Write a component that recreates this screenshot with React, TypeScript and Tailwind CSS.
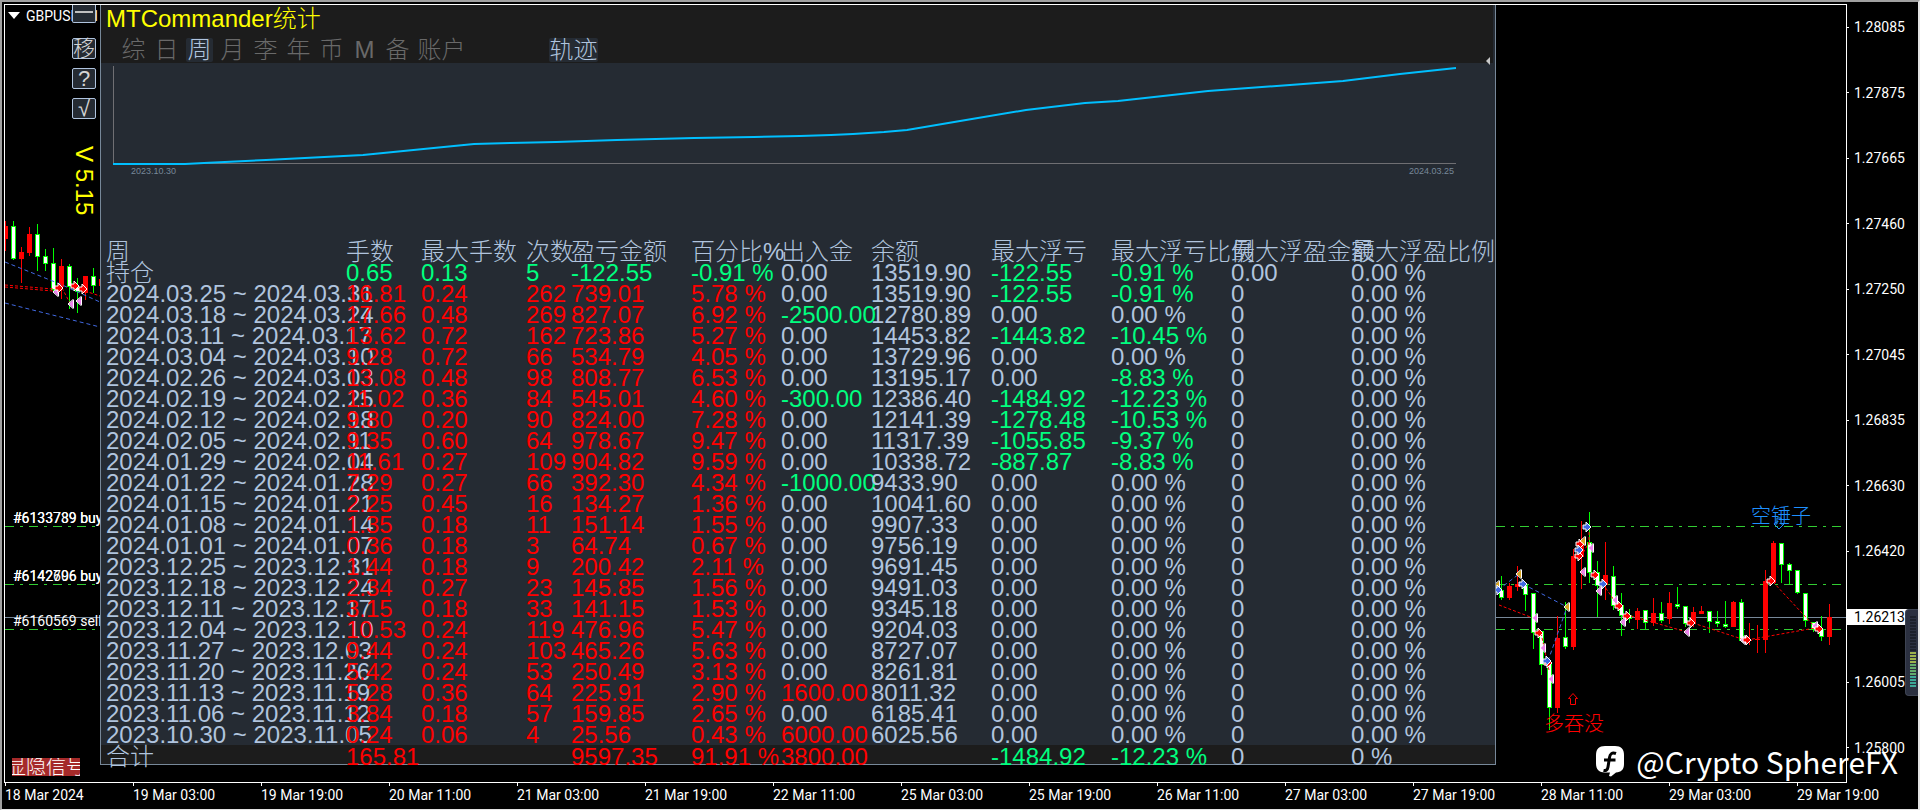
type Tone = "r" | "g" | "n";

const TONES: Record<Tone, string> = {
  r: "text-[#ff0000]",
  g: "text-[#00ff7f]",
  n: "text-[#b0c4de]",
};

const HEADERS = [
  "周",
  "手数",
  "最大手数",
  "次数",
  "盈亏金额",
  "百分比%",
  "出入金",
  "余额",
  "最大浮亏",
  "最大浮亏比例",
  "最大浮盈金额",
  "最大浮盈比例",
];

const COLS = [
  "w-[245px]",
  "w-[75px]",
  "w-[105px]",
  "w-[45px]",
  "w-[120px]",
  "w-[90px]",
  "w-[90px]",
  "w-[120px]",
  "w-[120px]",
  "w-[120px]",
  "w-[120px]",
  "",
];

// week, lots, max lots, trades, profit, percent, deposit, balance, max loss, max loss %
const WEEKS = [
  ["2024.03.25 ~ 2024.03.31", "16.81", "0.24", "262", "739.01", "5.78", "0.00", "13519.90", "-122.55", "-0.91"],
  ["2024.03.18 ~ 2024.03.24", "17.66", "0.48", "269", "827.07", "6.92", "-2500.00", "12780.89", "0.00", "0.00"],
  ["2024.03.11 ~ 2024.03.17", "13.62", "0.72", "162", "723.86", "5.27", "0.00", "14453.82", "-1443.82", "-10.45"],
  ["2024.03.04 ~ 2024.03.10", "9.28", "0.72", "66", "534.79", "4.05", "0.00", "13729.96", "0.00", "0.00"],
  ["2024.02.26 ~ 2024.03.03", "13.08", "0.48", "98", "808.77", "6.53", "0.00", "13195.17", "0.00", "-8.83"],
  ["2024.02.19 ~ 2024.02.25", "11.02", "0.36", "84", "545.01", "4.60", "-300.00", "12386.40", "-1484.92", "-12.23"],
  ["2024.02.12 ~ 2024.02.18", "9.80", "0.20", "90", "824.00", "7.28", "0.00", "12141.39", "-1278.48", "-10.53"],
  ["2024.02.05 ~ 2024.02.11", "9.35", "0.60", "64", "978.67", "9.47", "0.00", "11317.39", "-1055.85", "-9.37"],
  ["2024.01.29 ~ 2024.02.04", "11.61", "0.27", "109", "904.82", "9.59", "0.00", "10338.72", "-887.87", "-8.83"],
  ["2024.01.22 ~ 2024.01.28", "7.29", "0.27", "66", "392.30", "4.34", "-1000.00", "9433.90", "0.00", "0.00"],
  ["2024.01.15 ~ 2024.01.21", "2.25", "0.45", "16", "134.27", "1.36", "0.00", "10041.60", "0.00", "0.00"],
  ["2024.01.08 ~ 2024.01.14", "1.35", "0.18", "11", "151.14", "1.55", "0.00", "9907.33", "0.00", "0.00"],
  ["2024.01.01 ~ 2024.01.07", "0.36", "0.18", "3", "64.74", "0.67", "0.00", "9756.19", "0.00", "0.00"],
  ["2023.12.25 ~ 2023.12.31", "1.44", "0.18", "9", "200.42", "2.11", "0.00", "9691.45", "0.00", "0.00"],
  ["2023.12.18 ~ 2023.12.24", "2.34", "0.27", "23", "145.85", "1.56", "0.00", "9491.03", "0.00", "0.00"],
  ["2023.12.11 ~ 2023.12.17", "3.15", "0.18", "33", "141.15", "1.53", "0.00", "9345.18", "0.00", "0.00"],
  ["2023.12.04 ~ 2023.12.10", "10.53", "0.24", "119", "476.96", "5.47", "0.00", "9204.03", "0.00", "0.00"],
  ["2023.11.27 ~ 2023.12.03", "9.44", "0.24", "103", "465.26", "5.63", "0.00", "8727.07", "0.00", "0.00"],
  ["2023.11.20 ~ 2023.11.26", "5.42", "0.24", "53", "250.49", "3.13", "0.00", "8261.81", "0.00", "0.00"],
  ["2023.11.13 ~ 2023.11.19", "5.28", "0.36", "64", "225.91", "2.90", "1600.00", "8011.32", "0.00", "0.00"],
  ["2023.11.06 ~ 2023.11.12", "3.84", "0.18", "57", "159.85", "2.65", "0.00", "6185.41", "0.00", "0.00"],
  ["2023.10.30 ~ 2023.11.05", "0.24", "0.06", "4", "25.56", "0.43", "6000.00", "6025.56", "0.00", "0.00"],
];

const OPEN_ROW = ["持仓", "0.65", "0.13", "5", "-122.55", "-0.91 %", "0.00", "13519.90", "-122.55", "-0.91 %", "0.00", "0.00 %"];
const TOTAL_ROW = ["合计", "165.81", "", "", "9597.35", "91.91 %", "3800.00", "", "-1484.92", "-12.23 %", "0", "0 %"];

const TABS = ["综", "日", "周", "月", "李", "年", "币", "M", "备"];

const PRICES = [
  "1.28085",
  "1.27875",
  "1.27665",
  "1.27460",
  "1.27250",
  "1.27045",
  "1.26835",
  "1.26630",
  "1.26420",
  "1.26213",
  "1.26005",
  "1.25800",
];
const CURRENT_PRICE = "1.26213";

const TIMES = [
  "18 Mar 2024",
  "19 Mar 03:00",
  "19 Mar 19:00",
  "20 Mar 11:00",
  "21 Mar 03:00",
  "21 Mar 19:00",
  "22 Mar 11:00",
  "25 Mar 03:00",
  "25 Mar 19:00",
  "26 Mar 11:00",
  "27 Mar 03:00",
  "27 Mar 19:00",
  "28 Mar 11:00",
  "29 Mar 03:00",
  "29 Mar 19:00",
];

// [direction, high, body top, body bottom, low], one candle every 8px
type Candle = ["u" | "d", number, number, number, number];

const LEFT_CANDLES: Candle[] = [
  ["u", 221, 226, 239, 251],
  ["d", 221, 226, 259, 260],
  ["u", 247, 252, 259, 283],
  ["u", 227, 234, 253, 256],
  ["d", 224, 234, 257, 271],
  ["d", 249, 256, 264, 271],
  ["d", 248, 263, 290, 292],
  ["u", 259, 266, 287, 299],
  ["d", 264, 266, 287, 309],
  ["d", 278, 287, 292, 313],
  ["u", 276, 276, 293, 300],
  ["d", 268, 276, 286, 293],
  ["u", 276, 279, 286, 290],
];

const RIGHT_CANDLES: Candle[] = [
  ["d", 576, 590, 598, 600],
  ["u", 583, 586, 598, 600],
  ["u", 566, 584, 587, 591],
  ["d", 584, 585, 595, 611],
  ["d", 593, 593, 633, 649],
  ["d", 631, 631, 665, 675],
  ["d", 663, 664, 708, 730],
  ["u", 616, 638, 708, 713],
  ["d", 602, 637, 647, 649],
  ["u", 549, 556, 647, 650],
  ["u", 521, 542, 557, 589],
  ["d", 512, 542, 573, 583],
  ["d", 561, 572, 586, 617],
  ["u", 542, 575, 585, 600],
  ["d", 566, 576, 606, 610],
  ["d", 593, 605, 616, 636],
  ["d", 609, 615, 619, 623],
  ["u", 608, 611, 620, 629],
  ["d", 610, 610, 623, 629],
  ["u", 598, 613, 623, 626],
  ["d", 602, 613, 621, 623],
  ["u", 592, 603, 619, 624],
  ["d", 587, 604, 607, 609],
  ["d", 606, 606, 624, 627],
  ["u", 607, 612, 624, 627],
  ["u", 606, 611, 614, 614],
  ["d", 611, 611, 622, 633],
  ["d", 611, 621, 624, 627],
  ["d", 601, 624, 627, 628],
  ["u", 601, 602, 627, 627],
  ["d", 599, 602, 641, 642],
  ["u", 623, 640, 641, 645],
  ["u", 625, 639, 640, 653],
  ["u", 570, 581, 640, 653],
  ["u", 541, 543, 583, 583],
  ["d", 543, 543, 565, 583],
  ["d", 563, 564, 571, 584],
  ["d", 570, 570, 593, 594],
  ["d", 593, 593, 621, 627],
  ["d", 622, 622, 630, 632],
  ["d", 616, 629, 637, 641],
  ["u", 604, 617, 637, 645],
];

const EQUITY: [number, number][] = [
  [113, 164],
  [185, 164],
  [204, 163],
  [266, 160],
  [363, 155],
  [474, 144],
  [510, 143],
  [556, 142],
  [617, 140],
  [694, 138],
  [754, 137],
  [800, 136],
  [831, 135],
  [853, 134],
  [884, 132],
  [907, 130],
  [966, 120],
  [1026, 110],
  [1085, 103],
  [1118, 101],
  [1208, 91],
  [1290, 85],
  [1343, 81],
  [1400, 74],
  [1456, 68],
];

function cells(w: string[]) {
  return [...w.slice(0, 5), `${w[5]} %`, ...w.slice(6, 9), `${w[9]} %`, "0", "0.00 %"];
}

// column 0, balance and floating profit stay neutral, the rest depends on the sign
function tone(value: string, col: number, open: boolean): Tone {
  if (col === 0 || col === 7 || col > 9) return "n";
  if (value.startsWith("-")) return "g";
  if (col === 6 || col > 7) return parseFloat(value) === 0 ? "n" : "r";
  return open ? "g" : "r";
}

function Candles({ data, x0 }: { data: Candle[]; x0: number }) {
  return (
    <g shapeRendering="crispEdges">
      {data.map(([dir, high, top, bottom, low], i) => {
        const x = x0 + i * 8;
        const color = dir === "u" ? "#ff0000" : "#00ff00";
        return (
          <g key={i}>
            <rect x={x} y={high} width="1" height={Math.max(1, low - high)} fill={color} />
            <rect x={x - 2} y={top} width="5" height={Math.max(1, bottom - top)} fill={color} />
            {dir === "d" && bottom - top > 2 && (
              <rect x={x - 1} y={top + 1} width="3" height={bottom - top - 2} fill="#fff" />
            )}
          </g>
        );
      })}
    </g>
  );
}

function Entry({ x, y, color }: { x: number; y: number; color: string }) {
  return (
    <path
      d={`M${x - 4} ${y - 2}h3v-3l5 5l-5 5v-3h-3z`}
      fill={color}
      stroke="#fff"
      strokeWidth="1"
    />
  );
}

function Exit({ x, y, color }: { x: number; y: number; color: string }) {
  return (
    <g>
      <path d={`M${x + 2} ${y - 4}v8l-4.500 -4z`} fill={color} />
      <path d={`M${x + 2.5} ${y - 4.5}v9M${x + 2} ${y - 4.5}l-5 4.500l5 4.500`} fill="none" stroke="#fff" />
    </g>
  );
}

function Levels({ x1, x2 }: { x1: number; x2: number }) {
  return (
    <g shapeRendering="crispEdges">
      {[526, 584, 629].map((y) => (
        <path key={y} d={`M${x1} ${y}.5H${x2}`} stroke="#32cd32" strokeDasharray="9 6 3 6" />
      ))}
      <path d={`M${x1} 617.5H${x2}`} stroke="#778899" />
    </g>
  );
}

function ToolButton({ label, children, className = "" }: { label: string; children: React.ReactNode; className?: string }) {
  return (
    <button
      type="button"
      aria-label={label}
      className={`flex h-[21px] w-6 items-center justify-center rounded-[2px] border border-[#b0c4de] bg-[#252b33] text-[22px] leading-none font-light text-[#d3d3d3] ${className}`}
    >
      {children}
    </button>
  );
}

function LeftStrip() {
  return (
    <div className="relative flex w-[95px] shrink-0 flex-col overflow-hidden">
      <svg className="absolute top-0 left-0" width="95" height="777" viewBox="5 5 95 777" aria-hidden="true">
        <path d="M8 12h12l-6 7z" fill="#fff" />
        <Levels x1={5} x2={100} />
        <Candles data={LEFT_CANDLES} x0={5} />
        <g fill="none">
          <path d="M5 262L60 284L100 302M5 303L100 327" stroke="#4169e1" strokeDasharray="4 3" />
          <path d="M5 285L53 289M5 287L53 291M62 288L71 305M85 291L100 296" stroke="#ff0000" strokeDasharray="3 2" />
        </g>
        <Exit x={56} y={292} color="#ee82ee" />
        <Entry x={59} y={288} color="#ff0000" />
        <Entry x={75} y={286} color="#ff0000" />
        <Entry x={83} y={289} color="#ff0000" />
        <Exit x={71} y={304} color="#ee82ee" />
        <Exit x={79} y={301} color="#ee82ee" />
        <g fill="#fff" fontFamily="Roboto, sans-serif" fontSize="14">
          <text x="26" y="21">GBPUSD,H1</text>
          <text x="13" y="523">#6133739 buy</text>
          <text x="13" y="523">#6133789 buy</text>
          <text x="13" y="581">#6142696 buy</text>
          <text x="13" y="581">#6142706 buy</text>
          <text x="13" y="626">#6160569 sell</text>
        </g>
      </svg>
      <div className="relative flex flex-col items-end gap-[9px] pr-1">
        <button
          type="button"
          aria-label="最小化"
          className="mb-[6px] h-[18px] w-6 rounded-b-[2px] border border-t-0 border-[#b0c4de] bg-[#252b33]"
        >
          <span className="mx-auto mb-1 block h-[2px] w-[18px] bg-[#c0c0c0]" />
        </button>
        <ToolButton label="移动">移</ToolButton>
        <ToolButton label="帮助">?</ToolButton>
        <ToolButton label="确认">√</ToolButton>
        <p className="mt-[18px] text-[24px] leading-[24px] text-[#ffff00] [writing-mode:vertical-rl]">V 5.15</p>
      </div>
      <button
        type="button"
        className="relative mt-auto mb-[6px] ml-[7px] flex h-[18px] w-[68px] items-center justify-center overflow-hidden bg-[#a52a2a] text-[20px] leading-none font-light whitespace-nowrap text-white"
      >
        <span className="shrink-0">显隐信号</span>
      </button>
    </div>
  );
}

function PanelHeader() {
  return (
    <header className="relative mr-[2px] h-[58px] bg-[#1c1c1c]">
      <h1 className="pl-[5px] text-[24px] leading-[27px] font-light text-[#ffff00]">MTCommander统计</h1>
      <nav className="mt-[6px] flex h-6 gap-[6px] pl-[19px] text-[24px] leading-[24px] font-light text-[#696969]">
        {TABS.map((t) => (
          <button
            key={t}
            type="button"
            className={
              t === "周"
                ? "flex w-[27px] justify-center rounded-[2px] bg-[#252b33] text-[#b0c4de]"
                : "flex w-[27px] justify-center"
            }
          >
            {t}
          </button>
        ))}
        <button type="button" className="w-[49px]">账户</button>
        <button type="button" className="ml-[77px] w-[49px] rounded-[2px] bg-[#252b33] text-[#b0c4de]">
          轨迹
        </button>
      </nav>
      <svg className="absolute right-[2px] bottom-0 translate-y-[2px]" width="5" height="8" viewBox="0 0 5 8" aria-hidden="true">
        <path d="M4 0v8L0 4z" fill="#c8c8c8" />
      </svg>
    </header>
  );
}

function EquityChart() {
  return (
    <section className="h-[178px] pt-[3px] pr-[39px] pl-3">
      <svg
        className="block h-[99px] w-full overflow-visible"
        viewBox="113 66 1343 99"
        preserveAspectRatio="none"
        role="img"
        aria-label="轨迹"
      >
        <path d="M113.5 66V163.5H1456" fill="none" stroke="#6f6f73" shapeRendering="crispEdges" />
        <polyline
          points={EQUITY.map((p) => p.join(",")).join(" ")}
          fill="none"
          stroke="#00bfff"
          strokeWidth="2"
        />
      </svg>
      <div className="flex justify-between pr-[2px] pl-[18px] text-[9px] leading-[12px] text-[#778899]">
        <span>2023.10.30</span>
        <span>2024.03.25</span>
      </div>
    </section>
  );
}

function Row({ values, open = false }: { values: string[]; open?: boolean }) {
  return (
    <tr>
      {values.map((v, i) => (
        <td key={i} className={`h-[21px] p-0 first:pl-[5px] ${TONES[tone(v, i, open)]}`}>
          {v}
        </td>
      ))}
    </tr>
  );
}

function WeekTable() {
  return (
    <table className="w-full table-fixed border-collapse text-left text-[24px] leading-[21px] font-light whitespace-nowrap">
      <colgroup>
        {COLS.map((c, i) => (
          <col key={i} className={c} />
        ))}
      </colgroup>
      <thead>
        <tr>
          {HEADERS.map((h) => (
            <th key={h} scope="col" className="h-[21px] p-0 font-light text-[#b0c4de] first:pl-[5px]">
              {h}
            </th>
          ))}
        </tr>
      </thead>
      <tbody>
        <Row values={OPEN_ROW} open />
        {WEEKS.map((w) => (
          <Row key={w[0]} values={cells(w)} />
        ))}
      </tbody>
      <tfoot className="bg-[#1c1c1c]">
        <tr>
          {TOTAL_ROW.map((v, i) => (
            <td key={i} className={`p-0 first:pl-[5px] ${TONES[tone(v, i, false)]}`}>
              <div className="h-[19px] leading-[24px]">{v}</div>
            </td>
          ))}
        </tr>
      </tfoot>
    </table>
  );
}

function StatsPanel() {
  return (
    <main className="min-w-0 flex-1 self-start border-x border-b border-[#778899] bg-[#252b33]">
      <PanelHeader />
      <EquityChart />
      <WeekTable />
    </main>
  );
}

function PriceChart() {
  return (
    <svg className="block w-[350px] shrink-0" width="350" height="777" viewBox="1496 5 350 777" role="img" aria-label="GBPUSD">
      <Levels x1={1496} x2={1846} />
      <Candles data={RIGHT_CANDLES} x0={1501} />
      <g fill="none">
        <path
          d="M1499 605L1533 618M1541 633L1549 670M1581 557L1589 542M1589 527V548M1603 584L1618 606M1631 616L1687 632M1693 623L1745 640M1747 640L1815 628M1773 582L1815 627"
          stroke="#ff0000"
          strokeDasharray="3 2"
        />
        <path d="M1498 590L1519 574M1523 584L1567 607M1548 661L1567 607" stroke="#4169e1" strokeDasharray="4 3" />
      </g>
      <Exit x={1497} y={585} color="#daa520" />
      <Entry x={1498} y={590} color="#4169e1" />
      <Exit x={1519} y={574} color="#daa520" />
      <Entry x={1523} y={584} color="#4169e1" />
      <Exit x={1535} y={618} color="#ee82ee" />
      <Entry x={1539} y={633} color="#ff0000" />
      <Exit x={1543} y={648} color="#ee82ee" />
      <Entry x={1548} y={663} color="#ff0000" />
      <Entry x={1547} y={661} color="#4169e1" />
      <Exit x={1551} y={679} color="#ee82ee" />
      <Exit x={1567} y={607} color="#daa520" />
      <Entry x={1580} y={544} color="#ff0000" />
      <Entry x={1579} y={556} color="#ff0000" />
      <Entry x={1579} y={550} color="#4169e1" />
      <Exit x={1583} y={541} color="#daa520" />
      <Entry x={1587} y={527} color="#4169e1" />
      <Exit x={1591} y={548} color="#ee82ee" />
      <Exit x={1583} y={572} color="#ee82ee" />
      <Entry x={1595} y={575} color="#ff0000" />
      <Exit x={1599} y={591} color="#ee82ee" />
      <Entry x={1603} y={584} color="#4169e1" />
      <Exit x={1615} y={600} color="#ee82ee" />
      <Entry x={1619} y={606} color="#ff0000" />
      <Exit x={1623} y={622} color="#ee82ee" />
      <Entry x={1627} y={616} color="#ff0000" />
      <Exit x={1687} y={632} color="#ee82ee" />
      <Entry x={1691} y={623} color="#ff0000" />
      <Exit x={1743} y={640} color="#ee82ee" />
      <Entry x={1747} y={640} color="#ff0000" />
      <Entry x={1771} y={581} color="#ff0000" />
      <Exit x={1815} y={626} color="#ee82ee" />
      <Entry x={1819} y={629} color="#ff0000" />
      <path d="M1777 518h4v6h3l-5 5l-5 -5h3z" fill="none" stroke="#1e90ff" />
      <path d="M1570.500 704.500h5v-6h2l-4.500 -5l-4.500 5h2z" fill="none" stroke="#ff0000" />
      <g fontFamily="'Liberation Sans', 'Noto Sans CJK SC', sans-serif" fontSize="20" fontWeight="300">
        <text x="1751" y="523" fill="#1e90ff">空锤子</text>
        <text x="1544" y="731" fill="#ff0000">多吞没</text>
      </g>
    </svg>
  );
}

function PriceAxis() {
  return (
    <ol className="flex w-[71px] shrink-0 flex-col justify-between pt-[15px] pb-[27px] font-[Roboto,sans-serif] text-[14px] leading-[16px] text-white">
      {PRICES.map((p) => (
        <li key={p} className="flex items-center">
          {p === CURRENT_PRICE ? (
            <span className="-mr-2 w-[63px] bg-white pl-[7px] text-black">{p}</span>
          ) : (
            <>
              <span className="h-px w-[2px] bg-white" />
              <span className="pl-[5px]">{p}</span>
            </>
          )}
        </li>
      ))}
    </ol>
  );
}

function TimeAxis() {
  return (
    <ol className="flex h-[26px] overflow-hidden pl-px font-[Roboto,sans-serif] text-[14px] leading-[16px] text-white">
      {TIMES.map((t) => (
        <li key={t} className="w-32 shrink-0 whitespace-nowrap">
          <span className="block h-[3px] w-px bg-white" />
          <span className="block pt-px">{t}</span>
        </li>
      ))}
    </ol>
  );
}

// volume meter that hangs over the window edge
function Meter() {
  return (
    <div className="absolute top-[607px] right-0 flex h-[87px] w-[13px] flex-col justify-end gap-px rounded-l-[4px] border border-r-0 border-[#3d4352] bg-[#2b3040] pr-[2px] pb-[8px] pl-[4px]">
      {Array.from({ length: 24 }, (_, i) => (
        <span
          key={i}
          className={`h-[2px] shrink-0 ${i < 12 ? "bg-[#1c202b]" : i < 16 ? "bg-[#9db24c]" : i < 20 ? "bg-[#63ab6c]" : "bg-[#3ba695]"}`}
        />
      ))}
    </div>
  );
}

function Watermark() {
  return (
    <div className="absolute right-[20px] bottom-[30px] flex items-center gap-[12px] text-white">
      <svg width="28" height="32" viewBox="0 0 28 32" aria-hidden="true">
        <path
          d="M9 1h10c6 0 9 3 9 9v9c0 6-3 8-8 8.500L15 31.500 13 31l1-3.500H9c-6 0-9-3-9-9V10C0 4 3 1 9 1z"
          fill="#fff"
        />
        <path d="M20 8.500c-4-1.500-6 .5-6.500 4L12 22c-.5 3-2 4-4.500 3.500M8 15h11.500" fill="none" stroke="#000" strokeWidth="3" />
      </svg>
      <span className="font-['Noto_Sans_CJK_SC',sans-serif] text-[30px] leading-[36px]">@Crypto SphereFX</span>
    </div>
  );
}

export default function App() {
  return (
    <div className="relative flex min-h-screen flex-col overflow-hidden border-t-2 border-r-2 border-b border-l-2 border-t-[#a0a0a0] border-r-[#e3e3e3] border-b-[#e3e3e3] border-l-[#a0a0a0] bg-black pt-[2px] pl-[2px] font-['Liberation_Sans','Noto_Sans_CJK_SC',sans-serif]">
      <div className="flex flex-1">
        <div className="flex min-w-0 flex-1 border border-white">
          <LeftStrip />
          <StatsPanel />
          <PriceChart />
        </div>
        <PriceAxis />
      </div>
      <TimeAxis />
      <Watermark />
      <Meter />
    </div>
  );
}
